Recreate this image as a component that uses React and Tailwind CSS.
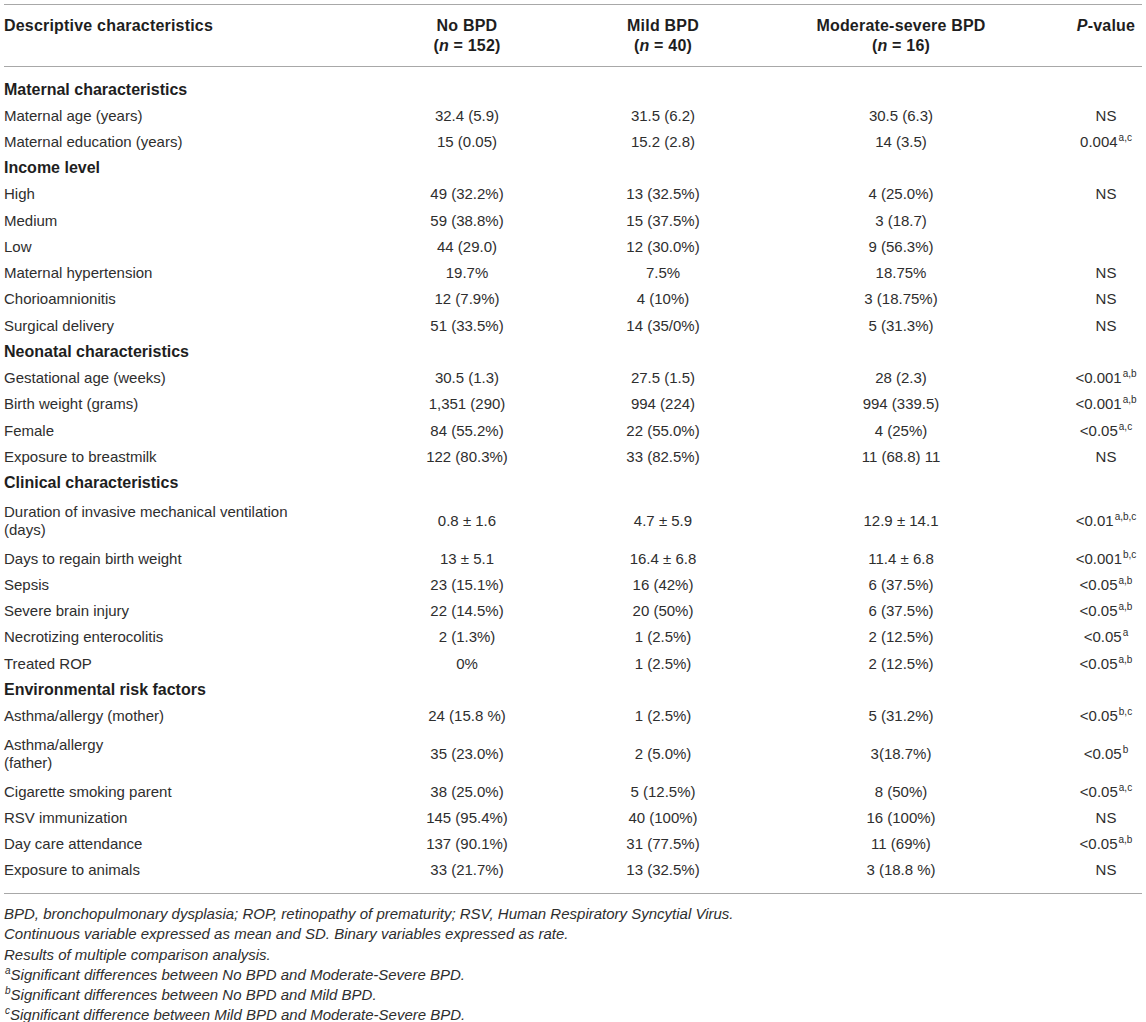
import React from "react";

const S = ({ children }) => <sup className="text-[10px] -top-[0.6em] ml-[1px]">{children}</sup>;

// section rows have only a label; data rows carry four values
const rows = [
  { section: "Maternal characteristics" },
  { label: "Maternal age (years)", v: ["32.4 (5.9)", "31.5 (6.2)", "30.5 (6.3)", "NS"] },
  { label: "Maternal education (years)", v: ["15 (0.05)", "15.2 (2.8)", "14 (3.5)", <>0.004<S>a,c</S></>] },
  { section: "Income level" },
  { label: "High", v: ["49 (32.2%)", "13 (32.5%)", "4 (25.0%)", "NS"] },
  { label: "Medium", v: ["59 (38.8%)", "15 (37.5%)", "3 (18.7)", ""] },
  { label: "Low", v: ["44 (29.0)", "12 (30.0%)", "9 (56.3%)", ""] },
  { label: "Maternal hypertension", v: ["19.7%", "7.5%", "18.75%", "NS"] },
  { label: "Chorioamnionitis", v: ["12 (7.9%)", "4 (10%)", "3 (18.75%)", "NS"] },
  { label: "Surgical delivery", v: ["51 (33.5%)", "14 (35/0%)", "5 (31.3%)", "NS"] },
  { section: "Neonatal characteristics" },
  { label: "Gestational age (weeks)", v: ["30.5 (1.3)", "27.5 (1.5)", "28 (2.3)", <>&lt;0.001<S>a,b</S></>] },
  { label: "Birth weight (grams)", v: ["1,351 (290)", "994 (224)", "994 (339.5)", <>&lt;0.001<S>a,b</S></>] },
  { label: "Female", v: ["84 (55.2%)", "22 (55.0%)", "4 (25%)", <>&lt;0.05<S>a,c</S></>] },
  { label: "Exposure to breastmilk", v: ["122 (80.3%)", "33 (82.5%)", "11 (68.8) 11", "NS"] },
  { section: "Clinical characteristics" },
  {
    label: <>Duration of invasive mechanical ventilation<br />(days)</>,
    tall: true,
    v: ["0.8 ± 1.6", "4.7 ± 5.9", "12.9 ± 14.1", <>&lt;0.01<S>a,b,c</S></>],
  },
  { label: "Days to regain birth weight", v: ["13 ± 5.1", "16.4 ± 6.8", "11.4 ± 6.8", <>&lt;0.001<S>b,c</S></>] },
  { label: "Sepsis", v: ["23 (15.1%)", "16 (42%)", "6 (37.5%)", <>&lt;0.05<S>a,b</S></>] },
  { label: "Severe brain injury", v: ["22 (14.5%)", "20 (50%)", "6 (37.5%)", <>&lt;0.05<S>a,b</S></>] },
  { label: "Necrotizing enterocolitis", v: ["2 (1.3%)", "1 (2.5%)", "2 (12.5%)", <>&lt;0.05<S>a</S></>] },
  { label: "Treated ROP", v: ["0%", "1 (2.5%)", "2 (12.5%)", <>&lt;0.05<S>a,b</S></>] },
  { section: "Environmental risk factors" },
  { label: "Asthma/allergy (mother)", v: ["24 (15.8 %)", "1 (2.5%)", "5 (31.2%)", <>&lt;0.05<S>b,c</S></>] },
  {
    label: <>Asthma/allergy<br />(father)</>,
    tall: true,
    v: ["35 (23.0%)", "2 (5.0%)", "3(18.7%)", <>&lt;0.05<S>b</S></>],
  },
  { label: "Cigarette smoking parent", v: ["38 (25.0%)", "5 (12.5%)", "8 (50%)", <>&lt;0.05<S>a,c</S></>] },
  { label: "RSV immunization", v: ["145 (95.4%)", "40 (100%)", "16 (100%)", "NS"] },
  { label: "Day care attendance", v: ["137 (90.1%)", "31 (77.5%)", "11 (69%)", <>&lt;0.05<S>a,b</S></>] },
  { label: "Exposure to animals", v: ["33 (21.7%)", "13 (32.5%)", "3 (18.8 %)", "NS"] },
];

const notes = [
  <>BPD, bronchopulmonary dysplasia; ROP, retinopathy of prematurity; RSV, Human Respiratory Syncytial Virus.</>,
  <>Continuous variable expressed as mean and SD. Binary variables expressed as rate.</>,
  <>Results of multiple comparison analysis.</>,
  <><S>a</S>Significant differences between No BPD and Moderate-Severe BPD.</>,
  <><S>b</S>Significant differences between No BPD and Mild BPD.</>,
  <><S>c</S>Significant difference between Mild BPD and Moderate-Severe BPD.</>,
];

export default function App() {
  return (
    <div
      className="bg-white px-[4px] pt-[4px] text-[15px] text-[#2e2e2e]"
      style={{ fontFamily: '"Liberation Sans", Arial, sans-serif' }}
    >
      <table className="w-[1138px] table-fixed border-collapse">
        <colgroup>
          <col className="w-[336px]" />
          <col className="w-[254px]" />
          <col className="w-[138px]" />
          <col className="w-[338px]" />
          <col className="w-[72px]" />
        </colgroup>
        <thead>
          <tr className="h-[62px] border-y border-[#a8a8a8] text-[16px] tracking-[0.2px] text-[#1e1e1e] leading-[20px]">
            <th className="text-left align-top pt-[11px] font-bold">Descriptive characteristics</th>
            <th className="text-center font-bold">
              No BPD
              <br />(<i>n</i> = 152)
            </th>
            <th className="text-center font-bold">
              Mild BPD
              <br />(<i>n</i> = 40)
            </th>
            <th className="text-center font-bold">
              Moderate-severe BPD
              <br />(<i>n</i> = 16)
            </th>
            <th className="text-center align-top pt-[11px] font-bold whitespace-nowrap">
              <i>P</i>-value
            </th>
          </tr>
        </thead>
        <tbody>
          <tr className="h-[10px]">
            <td colSpan={5}></td>
          </tr>
          {rows.map((r, i) =>
            r.section ? (
              <tr key={i} className="h-[26.25px]">
                <td colSpan={5} className="text-[16px] font-bold text-[#1e1e1e]">
                  {r.section}
                </td>
              </tr>
            ) : (
              <tr key={i} className={r.tall ? "h-[49.25px] leading-[18px]" : "h-[26.25px]"}>
                <td>{r.label}</td>
                {r.v.map((x, j) => (
                  <td key={j} className="text-center whitespace-nowrap">
                    {x}
                  </td>
                ))}
              </tr>
            )
          )}
          <tr className="h-[10px] border-b border-[#a8a8a8]">
            <td colSpan={5}></td>
          </tr>
        </tbody>
      </table>
      <div className="pt-[10px] italic text-[15px] leading-[20.2px]">
        {notes.map((n, i) => (
          <div key={i}>{n}</div>
        ))}
      </div>
    </div>
  );
}
